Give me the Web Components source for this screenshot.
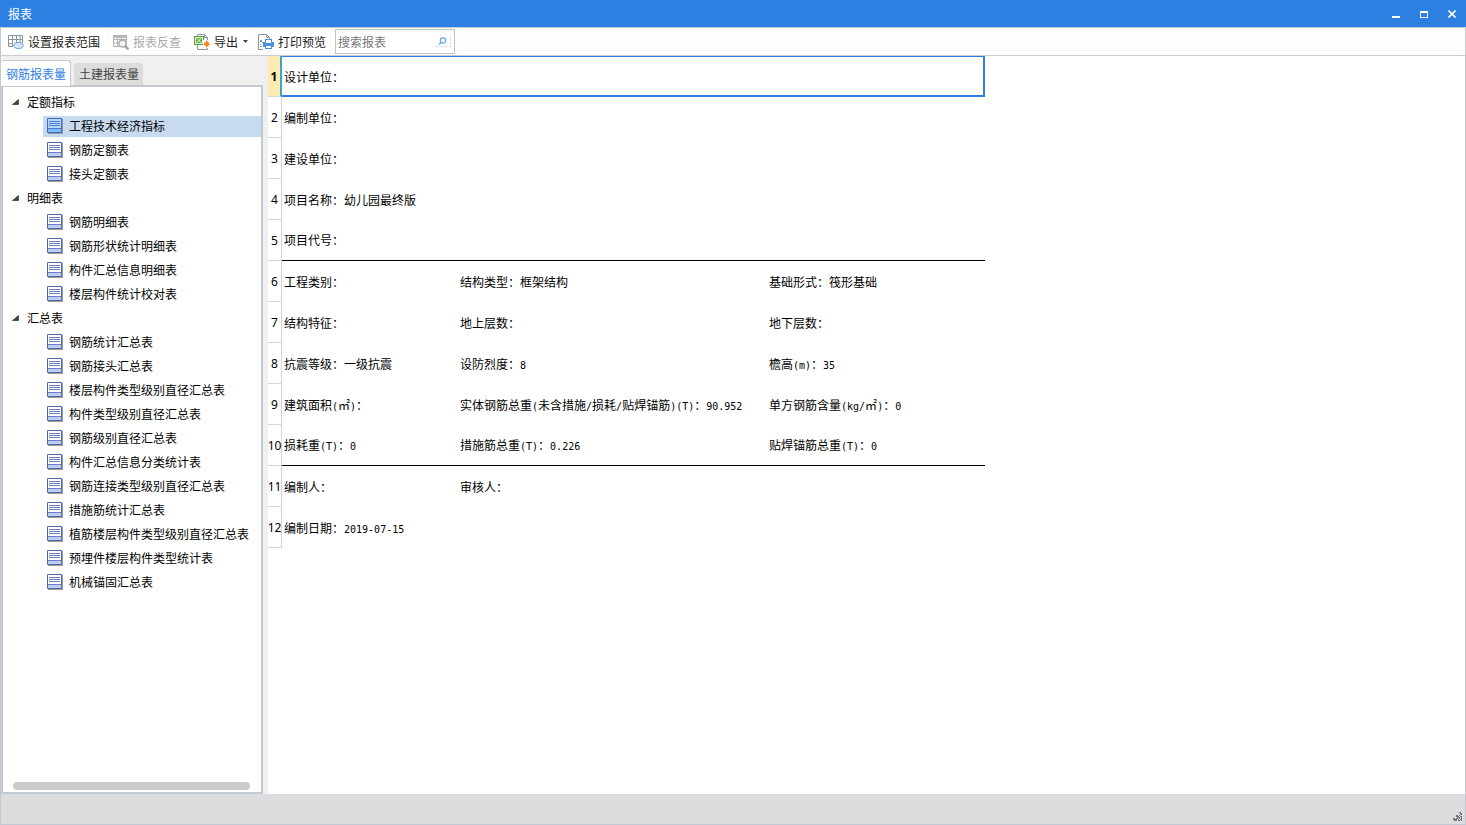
<!DOCTYPE html>
<html lang="zh-CN">
<head>
<meta charset="utf-8">
<title>报表</title>
<style>
html, body { height: 100%; margin: 0; }
body { font: 12px/16px "Noto Sans CJK SC", "Noto Sans", sans-serif; color: #000; background: #fff; overflow: hidden; }
</style>
</head>
<body>
<report-window>
  <title-bar slot="title">报表</title-bar>
  <tool-bar slot="tools">
    <tool-button icon="range">设置报表范围</tool-button>
    <tool-button icon="check" disabled>报表反查</tool-button>
    <tool-button icon="export" menu>导出</tool-button>
    <tool-button icon="print">打印预览</tool-button>
    <search-box placeholder="搜索报表"></search-box>
  </tool-bar>
  <report-tabs slot="side">
    <tree-group label="定额指标">
      <tree-item selected>工程技术经济指标</tree-item>
      <tree-item>钢筋定额表</tree-item>
      <tree-item>接头定额表</tree-item>
    </tree-group>
    <tree-group label="明细表">
      <tree-item>钢筋明细表</tree-item>
      <tree-item>钢筋形状统计明细表</tree-item>
      <tree-item>构件汇总信息明细表</tree-item>
      <tree-item>楼层构件统计校对表</tree-item>
    </tree-group>
    <tree-group label="汇总表">
      <tree-item>钢筋统计汇总表</tree-item>
      <tree-item>钢筋接头汇总表</tree-item>
      <tree-item>楼层构件类型级别直径汇总表</tree-item>
      <tree-item>构件类型级别直径汇总表</tree-item>
      <tree-item>钢筋级别直径汇总表</tree-item>
      <tree-item>构件汇总信息分类统计表</tree-item>
      <tree-item>钢筋连接类型级别直径汇总表</tree-item>
      <tree-item>措施筋统计汇总表</tree-item>
      <tree-item>植筋楼层构件类型级别直径汇总表</tree-item>
      <tree-item>预埋件楼层构件类型统计表</tree-item>
      <tree-item>机械锚固汇总表</tree-item>
    </tree-group>
  </report-tabs>
  <report-sheet slot="main"></report-sheet>
  <status-bar slot="status"></status-bar>
</report-window>

<script>
const define = (name, html, setup) => {
  const tpl = document.createElement('template');
  tpl.innerHTML = '<style>:host,*{box-sizing:border-box}button,input{font:inherit;color:inherit;border:0;background:none;margin:0;padding:0}</style>' + html;
  customElements.define(name, class extends HTMLElement {
    constructor() {
      super();
      this.attachShadow({ mode: 'open' }).append(tpl.content.cloneNode(true));
    }
    connectedCallback() {
      if (setup && !this.ready) { this.ready = true; setup(this, this.shadowRoot); }
    }
  });
};

define('report-window', `
<style>
:host { display: flex; flex-direction: column; height: 100vh; }
.body { flex: 1; min-height: 0; display: flex; background: #f0f0f0; border: solid #c3c9d2; border-width: 0 1px; }
main { flex: 1; min-width: 0; background: #fff; overflow: auto; }
</style>
<slot name="title"></slot>
<slot name="tools"></slot>
<div class="body"><slot name="side"></slot><main><slot name="main"></slot></main></div>
<slot name="status"></slot>`);

define('title-bar', `
<style>
:host { display: flex; align-items: center; justify-content: space-between; height: 27px; flex: none; padding: 0 5px 0 8px; background: #2d7fe2; color: #fff; }
h1 { font: inherit; margin: 0; }
.controls { display: flex; gap: 10px; }
button { width: 18px; height: 18px; display: grid; place-items: center; }
svg { display: block; }
</style>
<h1><slot></slot></h1>
<div class="controls">
  <button aria-label="最小化"><svg width="8" height="8"><path fill="#fff" d="M0 6h8v2H0z"/></svg></button>
  <button aria-label="最大化"><svg width="8" height="8"><path fill="#fff" fill-rule="evenodd" d="M0 1h8v7H0zM1 3h6v4H1z"/></svg></button>
  <button aria-label="关闭"><svg width="8" height="8"><path stroke="#fff" stroke-width="1.6" d="M.5.5l7 7M7.5.5l-7 7"/></svg></button>
</div>`);

define('tool-bar', `
<style>
:host { display: flex; align-items: center; gap: 2px; height: 29px; flex: none; padding: 0 3px; background: #fdfdfd; border: 1px solid #c8ccd0; border-left-color: #c3c9d2; }
</style>
<slot></slot>`);

const icons = {
  range: `<path fill="#fff" stroke="#8796a5" d="M.5 1.500h14v11H.5zM.5 5.500h14M.5 9.500h14M4.500 1.500v11M8.500 1.500v11M12 1.500v11"/><path fill="#fff" d="M5 9h11v6H5z"/><ellipse cx="10.500" cy="11.500" rx="4.500" ry="3" fill="#d8e8fc" stroke="#5b9be6"/>`,
  check: `<path fill="#b8b8b8" d="M0 1h14v3H0z"/><path fill="none" stroke="#b4b4b4" d="M.5 1.500h13v11H.5zM.5 5.500h13M.5 9h8M4.500 4v8.500M8.500 4v5"/><circle cx="9.500" cy="9.500" r="3.500" fill="#f4f4f4" stroke="#a8a8a8" stroke-width="1.300"/><path stroke="#a8a8a8" stroke-width="2.600" d="M12 12l3.500 3.500"/>`,
  export: `<path fill="#fff" stroke="#8796a5" d="M3.500.5h7l3 3v12h-10zM10.500.5v3h3"/><path fill="#5c9a3a" d="M0 2h10v9H0z"/><path fill="#e4f2d8" d="M1 3h8v7H1z"/><path fill="#6aaa48" d="M2 4h6v5H2z"/><path stroke="#f2faea" d="M3 4.500l4 4M7 4.500l-4 4"/><path fill="#fff" d="M9 6h7v8H9z"/><path fill="#f5821f" d="M10 8.500h2V6l4 4-4 4v-2.500h-2z"/>`,
  print: `<path fill="#fff" stroke="#8796a5" d="M.5.5h8l3 3v12H.5zM8.500.5v3h3"/><path fill="#8796a5" d="M2 6h2v2H2zM4 8h1v1H4zM2 10h1v1H2zM2 12h2v1H2z"/><path fill="#fff" d="M5 5h11v11H5z"/><path fill="#4a90e2" fill-rule="evenodd" d="M7 5h7v3h2v5h-2v2H7v-2H5V8h2zM8 6v3h5V6zM8 12v2h5v-2z"/>`
};
define('tool-button', `
<style>
:host { display: block; }
button { display: flex; align-items: center; gap: 3px; height: 21px; padding: 0 7px 0 4px; border-radius: 3px; background: #fff; color: #222; white-space: nowrap; }
button:disabled { color: #aaa; }
svg { flex: none; }
.arrow { margin-left: 2px; }
:host([menu]) button { padding-right: 4px; }
</style>
<button><svg class="icon" width="17" height="16"></svg><slot></slot></button>`, (el, root) => {
  root.querySelector('.icon').innerHTML = icons[el.getAttribute('icon')];
  const b = root.querySelector('button');
  b.disabled = el.hasAttribute('disabled');
  if (el.hasAttribute('menu')) {
    b.setAttribute('aria-haspopup', 'menu');
    b.insertAdjacentHTML('beforeend', '<svg class="arrow" width="5" height="3"><path fill="#444" d="M0 0h5L2.500 3z"/></svg>');
  }
});

define('search-box', `
<style>
:host { display: block; width: 120px; height: 25px; }
.field { display: flex; align-items: center; height: 100%; border: 1px solid #bfc5c8; background: #fff; padding: 0 3px 0 2px; }
input { flex: 1; min-width: 0; outline: 0; color: #000; }
input::placeholder { color: #777; }
button { width: 16px; height: 11px; display: grid; place-items: center; border: solid #e2e4e6; border-width: 0 1px 1px 0; }
</style>
<div class="field"><input type="search" aria-label="搜索报表"><button aria-label="搜索"><svg width="9" height="8"><circle cx="5" cy="3.500" r="2.700" fill="none" stroke="#5aa9e6" stroke-width="1.200"/><path stroke="#5aa9e6" stroke-width="1.500" d="M3 5.500L1 7.500"/></svg></button></div>`,
(el, root) => { root.querySelector('input').placeholder = el.getAttribute('placeholder'); });

define('report-tabs', `
<style>
:host { display: flex; flex-direction: column; width: 262px; margin-right: 5px; flex: none; }
.tabs { display: flex; align-items: flex-end; gap: 3px; height: 29px; }
.tabs button { height: 22px; padding: 0 4px 0 5px; background: #dcdcdc; color: #444; border-radius: 3px 3px 0 0; white-space: nowrap; }
.tabs button[aria-selected=true] { position: relative; height: 26px; margin-bottom: -1px; background: #fff; color: #2d7fe2; border-top: 1px solid #c3c9d2; border-right: 1px solid #c3c9d2; }
.panel { flex: 1; min-height: 0; display: flex; flex-direction: column; justify-content: space-between; border: 2px solid #c3c9d0; background: #fff; padding-top: 3px; }
.scroll { height: 8px; flex: none; margin: 0 11px 2px 10px; border-radius: 4px; background: #cbcbcb; }
</style>
<div class="tabs" role="tablist">
  <button role="tab" aria-selected="true">钢筋报表量</button>
  <button role="tab" aria-selected="false">土建报表量</button>
</div>
<div class="panel" role="tabpanel"><div role="tree"><slot></slot></div><div class="scroll"></div></div>`, (el, root) => {
  const tabs = [...root.querySelectorAll('[role=tab]')];
  tabs.forEach(t => t.onclick = () => tabs.forEach(o => o.setAttribute('aria-selected', o === t)));
  el.addEventListener('click', e => {
    const item = e.target.closest('tree-item');
    if (item) el.querySelectorAll('tree-item').forEach(i => i.toggleAttribute('selected', i === item));
  });
});

define('tree-group', `
<style>
:host { display: block; }
button { display: flex; align-items: center; gap: 8px; width: 100%; height: 24px; padding-left: 9px; }
:host([closed]) .items { display: none; }
:host([closed]) svg { transform: rotate(-45deg); }
</style>
<button aria-expanded="true"><svg width="7" height="6"><path fill="#404040" stroke="#222" stroke-width=".6" d="M6.500.5v5h-6z"/></svg><span></span></button>
<div class="items" role="group"><slot></slot></div>`, (el, root) => {
  root.querySelector('span').textContent = el.getAttribute('label');
  const b = root.querySelector('button');
  b.onclick = () => b.setAttribute('aria-expanded', !el.toggleAttribute('closed'));
});

define('tree-item', `
<style>
:host { display: block; padding: 2px 0 1px 40px; }
button { display: flex; align-items: flex-start; gap: 6px; width: 100%; height: 21px; padding: 2px 0 0 4px; white-space: nowrap; }
:host([selected]) button { background: #c8daf0; }
svg { flex: none; --top: #fff; --bottom: #bccdf8; --edge: #4a68b8; }
:host([selected]) svg { --top: #b4d8ff; --bottom: #82b8f8; --edge: #3a6cc0; }
</style>
<button role="treeitem"><svg width="16" height="16">
<path fill="#9a9a9a" d="M1 1h15v15H1z"/>
<path style="fill:var(--top);stroke:var(--edge)" d="M.5.5h14v14H.5z"/>
<path style="fill:var(--bottom)" d="M1 11h13v3H1z"/>
<path style="stroke:var(--edge)" d="M1 10.500h13M2 3.500h11M2 5.500h11M2 7.500h11" stroke-opacity=".85"/>
</svg><slot></slot></button>`);

const rows = [
  ['设计单位：'],
  ['编制单位：'],
  ['建设单位：'],
  ['项目名称：幼儿园最终版'],
  ['项目代号：'],
  ['工程类别：', '结构类型：框架结构', '基础形式：筏形基础'],
  ['结构特征：', '地上层数：', '地下层数：'],
  ['抗震等级：一级抗震', '设防烈度：8', '檐高(m)：35'],
  ['建筑面积(㎡)：', '实体钢筋总重(未含措施/损耗/贴焊锚筋)(T)：90.952', '单方钢筋含量(kg/㎡)：0'],
  ['损耗重(T)：0', '措施筋总重(T)：0.226', '贴焊锚筋总重(T)：0'],
  ['编制人：', '审核人：', ''],
  ['编制日期：2019-07-15']
];
define('report-sheet', `
<style>
:host { display: block; }
table { border-collapse: separate; border-spacing: 0; table-layout: fixed; width: 717px; }
.no { width: 14px; } .a { width: 176px; } .b { width: 309px; }
th, td { height: 41px; padding: 0; white-space: nowrap; text-align: left; }
th { padding-top: 2px; font: 12px/16px "Noto Sans", sans-serif; text-align: center; border: solid #d4d4d4; border-width: 0 1px 1px 0; }
th span { display: flex; justify-content: center; }
td { padding-left: 2px; }
.rule td { border-bottom: 1px solid #000; }
.current th { background: #ffebb0; font-weight: bold; border-right: 2px solid #3ba5d0; }
.current td { padding-top: 2px; border: solid #2d7fe2; border-width: 1px 2px 2px 0; }
.latin { font: 10px/10px "DejaVu Sans Mono", monospace; }
</style>
<table><colgroup><col class="no"><col class="a"><col class="b"><col></colgroup><tbody></tbody></table>`, (el, root) => {
  root.querySelector('tbody').innerHTML = rows.map((cells, i) => {
    const cls = i === 0 ? 'current' : i === 4 || i === 9 ? 'rule' : '';
    const tds = cells.map(c => `<td${cells.length === 1 ? ' colspan="3"' : ''}>${c.replace(/[\x20-\x7e]+/g, '<span class="latin">$&</span>')}</td>`).join('');
    return `<tr class="${cls}"><th scope="row"><span>${i + 1}</span></th>${tds}</tr>`;
  }).join('');
});

define('status-bar', `
<style>
:host { display: flex; align-items: flex-end; justify-content: flex-end; height: 31px; flex: none; padding: 0 3px 3px; background: #dddddf; border: solid #c3c9d2; border-width: 0 1px 1px; }
svg { display: block; }
</style>
<svg width="9" height="9"><path fill="#70757c" d="M6 0h2v1H6zM7 1h2v2H7zM3 3h2v2H3zM6 3h1v1H6zM5 4h1v1H5zM7 4h2v1H7zM4 5h2v1H4zM6 5h1v2H6zM8 5h1v2H8zM0 6h2v2H0zM3 6h2v1H3zM2 7h2v1H2zM5 7h1v1H5zM7 7h2v1H7zM1 8h3v1H1zM5 8h2v1H5zM8 8h1v1H8z"/></svg>`);
</script>
</body>
</html>
